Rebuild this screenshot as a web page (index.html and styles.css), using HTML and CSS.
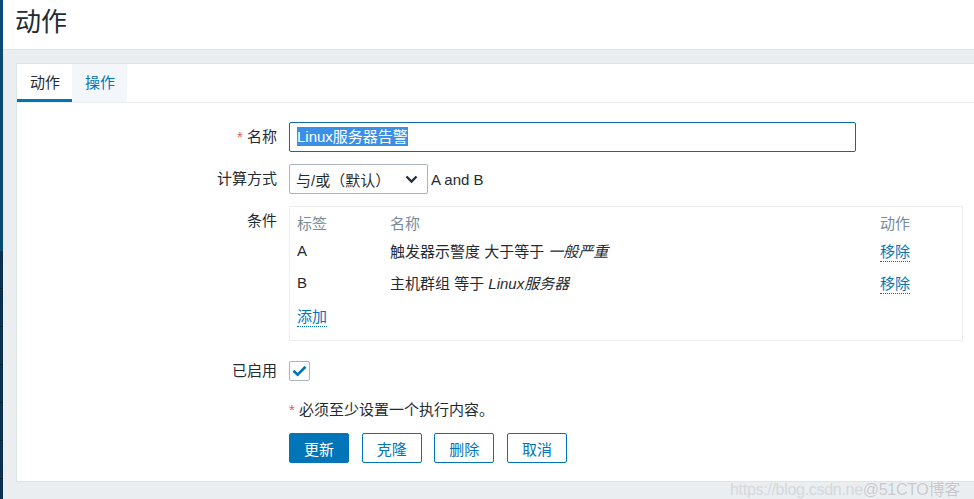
FILE: index.html
```html
<!DOCTYPE html>
<html lang="zh">
<head>
<meta charset="utf-8">
<title>动作</title>
<link rel="stylesheet" href="styles.css">
</head>
<body>
<div class="app">
  <div class="sidebar">
    <div class="sb-top"></div>
    <div class="sb-bottom"></div>
  </div>
  <div class="main">
    <header class="header"><h1 class="title">动作</h1></header>
    <div class="content">
      <div class="panel">
        <ul class="tabs">
          <li class="tab active">动作</li>
          <li class="tab alt">操作</li>
        </ul>
        <form class="form">
          <div class="row r-name">
            <label class="lbl"><span class="req">*</span> 名称</label>
            <div class="field">
              <div class="input focused"><span class="sel">Linux服务器告警</span></div>
            </div>
          </div>
          <div class="row r-calc">
            <label class="lbl">计算方式</label>
            <div class="field inline">
              <div class="select">
                <span>与/或（默认）</span>
                <svg class="chev" width="13" height="9" viewBox="0 0 13 9"><path d="M1.5 1.5 L6.5 6.5 L11.5 1.5" fill="none" stroke="#1f2c33" stroke-width="2.3"/></svg>
              </div>
              <span class="expr">A and B</span>
            </div>
          </div>
          <div class="row r-cond">
            <label class="lbl">条件</label>
            <div class="field">
              <div class="condbox">
                <table class="cond">
                  <colgroup><col class="c1"><col><col class="c3"></colgroup>
                  <thead>
                    <tr><th>标签</th><th>名称</th><th>动作</th></tr>
                  </thead>
                  <tbody>
                    <tr><td>A</td><td>触发器示警度 大于等于 <i>一般严重</i></td><td><a class="link">移除</a></td></tr>
                    <tr><td>B</td><td>主机群组 等于 <i>Linux服务器</i></td><td><a class="link">移除</a></td></tr>
                    <tr class="add"><td colspan="3"><a class="link">添加</a></td></tr>
                  </tbody>
                </table>
              </div>
            </div>
          </div>
          <div class="row r-enabled">
            <label class="lbl">已启用</label>
            <div class="field">
              <span class="checkbox">
                <svg width="15" height="12" viewBox="0 0 15 12"><path d="M1.5 5.8 L5.6 9.6 L13.5 1.8" fill="none" stroke="#0275b8" stroke-width="2.6"/></svg>
              </span>
            </div>
          </div>
          <div class="row r-note">
            <span></span>
            <div class="note"><span class="req">*</span> 必须至少设置一个执行内容。</div>
          </div>
          <div class="row r-buttons">
            <span></span>
            <div class="buttons">
              <button type="button" class="btn primary">更新</button>
              <button type="button" class="btn">克隆</button>
              <button type="button" class="btn">删除</button>
              <button type="button" class="btn">取消</button>
            </div>
          </div>
        </form>
      </div>
    </div>
  </div>
</div>
<div class="watermark"><span class="wm1">https://blog.csdn.ne</span><span class="wm2">@51CTO博客</span></div>
</body>
</html>
```
FILE: styles.css
```css
* { box-sizing: border-box; }
html, body { margin: 0; padding: 0; }
body {
  background: #ebeef1;
  font-family: "Liberation Sans", "Noto Sans CJK SC", sans-serif;
  font-size: 15px;
  color: #1f2c33;
  overflow: hidden;
}
.app { display: flex; height: 499px; }
.sidebar { width: 3px; display: flex; flex-direction: column; }
.sb-top { height: 251px; background: #0a4a74; }
.sb-bottom {
  flex: 1;
  background: repeating-linear-gradient(to bottom, #0c3150 0, #0c3150 37px, #071c2c 37px, #071c2c 38px);
}
.main { flex: 1; display: flex; flex-direction: column; min-width: 0; }
.header {
  height: 50px;
  background: #fff;
  border-bottom: 1px solid #dfe4e7;
  padding-left: 12px;
}
.title {
  margin: 0;
  font-weight: normal;
  font-size: 26px;
  line-height: 44px;
  color: #1f2c33;
}
.content { padding: 13px 0 0 13px; }
.panel {
  background: #fff;
  border: 1px solid #dfe4e7;
  border-right: none;
  height: 419px;
}
.tabs {
  list-style: none;
  margin: 0;
  padding: 0;
  display: flex;
  border-bottom: 1px solid #ebeef1;
}
.tab {
  height: 38px;
  line-height: 38px;
  padding: 0 12px 0 13px;
  width: 55px;
  color: #1f2c33;
}
.tab.active { box-shadow: inset 0 -3px 0 #0275b8; }
.tab.alt { background: #f3f7fc; color: #0275b8; }
.form { padding-top: 19px; }
.row {
  display: grid;
  grid-template-columns: 260px 1fr;
  column-gap: 12px;
}
.lbl { text-align: right; line-height: 30px; white-space: nowrap; }
.req { color: #e45959; }
.r-name, .r-calc { margin-bottom: 12px; }
.input {
  width: 567px;
  height: 30px;
  border: 1px solid #a9b4bc;
  border-radius: 2px;
  padding: 0 7px;
  line-height: 28px;
}
.input.focused { border-color: #0d69a5; }
.sel { background: #3a8fe6; color: #fff; padding: 1px 0; }
.inline { display: flex; align-items: center; gap: 3px; }
.select {
  width: 139px;
  height: 30px;
  border: 1px solid #a9b4bc;
  border-radius: 2px;
  padding: 0 9px 0 6px;
  display: flex;
  align-items: center;
  justify-content: space-between;
}
.condbox {
  width: 674px;
  border: 1px solid #ebeef1;
  padding: 3px 8px 5px 7px;
}
.cond { width: 100%; border-collapse: collapse; table-layout: fixed; }
.cond .c1 { width: 93px; }
.cond .c3 { width: 74px; }
.cond th {
  font-weight: normal;
  color: #768d99;
  text-align: left;
  height: 24px;
  padding: 0;
}
.cond td { height: 32px; padding: 0; white-space: nowrap; }
.cond tr.add td { height: 37px; padding-top: 9px; vertical-align: top; line-height: 20px; }
.link {
  color: #0275b8;
  border-bottom: 1px dotted #0275b8;
  text-decoration: none;
  padding-bottom: 1px;
}
.r-enabled { margin-top: 20px; }
.r-enabled .lbl { line-height: 20px; }
.checkbox {
  width: 21px;
  height: 20px;
  border: 1px solid #a9b4bc;
  border-radius: 2px;
  display: flex;
  align-items: center;
  justify-content: center;
}
.r-note { margin-top: 19px; }
.note { line-height: 20px; }
.r-buttons { margin-top: 13px; }
.buttons { display: flex; gap: 12.7px; }
.btn {
  width: 60px;
  height: 30px;
  font-family: inherit;
  font-size: 15px;
  background: #fff;
  color: #0275b8;
  border: 1px solid #0275b8;
  border-radius: 2px;
  padding: 0;
}
.btn.primary { background: #0275b8; color: #fff; }
.watermark {
  position: absolute;
  left: 730px;
  top: 476px;
  font-size: 16px;
  letter-spacing: -0.3px;
  white-space: nowrap;
}
.wm1 { color: #d4d8dc; }
.wm2 { color: #c4c8cc; text-shadow: 0 0 1px #fff; }
```
